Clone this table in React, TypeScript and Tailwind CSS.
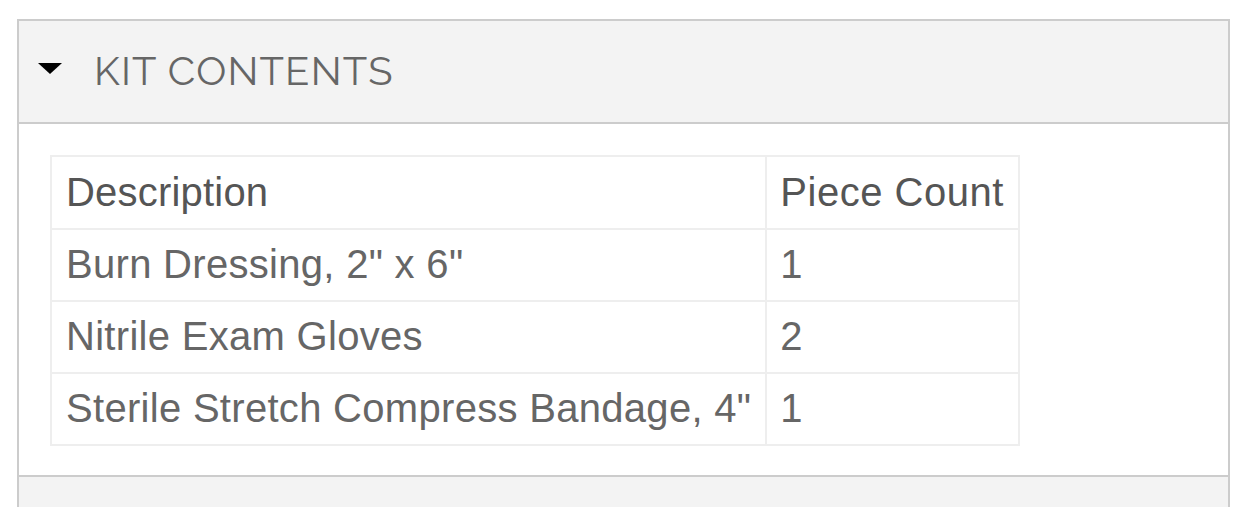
export default function App() {
  const rows = [
    ["Burn Dressing, 2\" x 6\"", "1"],
    ["Nitrile Exam Gloves", "2"],
    ["Sterile Stretch Compress Bandage, 4\"", "1"],
  ];
  return (
    <div className="w-[1250px] h-[507px] bg-white overflow-hidden pt-[19px] pl-[17px]">
      <div className="w-[1213px] border-2 border-[#cccccc]">
        <div className="h-[103px] bg-[#f3f3f3] border-b-2 border-[#cccccc] flex items-center pl-[19px]">
          <svg width="24" height="11" viewBox="0 0 24 11" className="mr-[32px] mt-[-6px]">
            <polygon points="0,0 24,0 12,11" fill="#000" />
          </svg>
          <span
            className="text-[40px] text-[#666666] tracking-[1.2px] font-normal leading-none mt-[-2px]"
            style={{ fontFamily: "Raleway, Lato, 'Open Sans', sans-serif" }}
          >
            KIT CONTENTS
          </span>
        </div>
        <div className="pl-[31px] pt-[31px] pb-[29px] border-b-2 border-[#cccccc]">
          <table
            className="border-collapse text-[40px] text-[#666666] tracking-[0.3px]"
            style={{ fontFamily: "'Liberation Sans', Arial, sans-serif" }}
          >
            <thead>
              <tr className="h-[73px]">
                <th className="border-2 border-[#eeeeee] px-[14px] text-left font-normal tracking-[0.2px] text-[#555555] pb-[2px]">
                  Description
                </th>
                <th className="border-2 border-[#eeeeee] pl-[13px] pr-[14px] text-left font-normal tracking-[0.5px] text-[#555555] pb-[2px]">
                  Piece Count
                </th>
              </tr>
            </thead>
            <tbody>
              {rows.map((r, i) => (
                <tr key={i} className="h-[72px]">
                  <td className="border-2 border-[#eeeeee] px-[14px] leading-none pb-[2px]">{r[0]}</td>
                  <td className="border-2 border-[#eeeeee] px-[13px] leading-none pb-[2px]">{r[1]}</td>
                </tr>
              ))}
            </tbody>
          </table>
        </div>
        <div className="h-[60px] bg-[#f3f3f3]"></div>
      </div>
    </div>
  );
}
